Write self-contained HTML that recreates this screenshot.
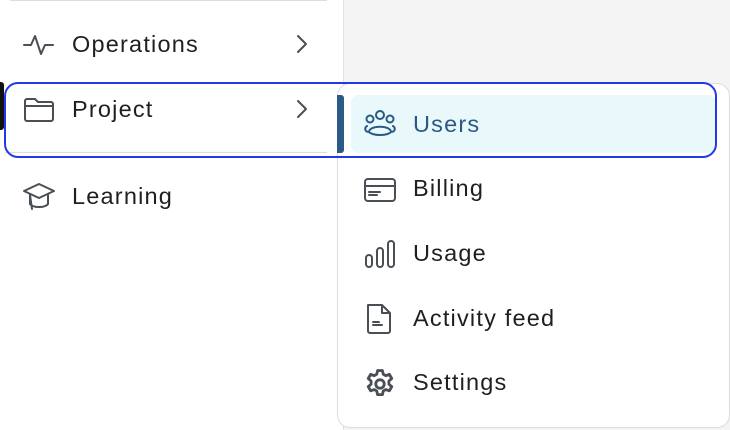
<!DOCTYPE html><html><head><style>
body{margin:0;width:730px;height:430px;overflow:hidden;background:#fff;font-family:"Liberation Sans",sans-serif;position:relative;color:#1f1f1f}
.a{position:absolute}
.t{position:absolute;font-size:23.5px;line-height:26px;letter-spacing:1.2px}
svg{position:absolute;fill:none;stroke:#4a4e55;stroke-width:2;stroke-linecap:round;stroke-linejoin:round}
</style></head><body>
<div class="a" style="left:343px;top:0;width:387px;height:430px;background:#f4f4f5;border-left:1px solid #e2e2e2"></div>
<div class="a" style="left:10px;top:0;width:317px;height:1px;background:#ddd"></div>
<div class="a" style="left:0;top:82px;width:4px;height:48px;background:#111;border-radius:0 3px 3px 0"></div>
<div class="a" style="left:5px;top:152px;width:322px;height:1px;background:#ddd"></div>
<svg style="left:22px;top:32px" width="34" height="26" viewBox="0 0 34 26"><path d="M2 13h7l4-9 6 18 4-9h8"/></svg>
<div class="t" style="left:72px;top:31px">Operations</div>
<svg style="left:294px;top:33px" width="16" height="22"><path d="M4 3l8 8-8 8"/></svg>
<svg style="left:22px;top:96px" width="34" height="28" viewBox="0 0 34 28"><path d="M3 5a2 2 0 0 1 2-2h8l3 3h13a2 2 0 0 1 2 2v15a2 2 0 0 1-2 2H5a2 2 0 0 1-2-2z M3 10h28"/></svg>
<div class="t" style="left:72px;top:96px">Project</div>
<svg style="left:294px;top:98px" width="16" height="22"><path d="M4 3l8 8-8 8"/></svg>
<svg style="left:22px;top:181px" width="34" height="32" viewBox="0 0 34 32"><path d="M17 3L2 10l15 7 15-7z M8 13v10c3 4 15 4 18 0V13 M8 14l2 14"/></svg>
<div class="t" style="left:72px;top:183px">Learning</div>
<div class="a" style="left:337px;top:83px;width:391px;height:343px;background:#fff;border:1px solid #ddd;border-radius:13px"></div>
<div class="a" style="left:337px;top:95px;width:7px;height:58px;background:#2b5a86;border-radius:0 3px 3px 0"></div>
<div class="a" style="left:351px;top:95px;width:365px;height:58px;background:#e9f8fa;border-radius:8px"></div>
<div class="a" style="left:4px;top:82px;width:709px;height:72px;border:2px solid #1f3ae6;border-radius:14px"></div>
<svg style="left:363px;top:109px;stroke:#2b5a86" width="34" height="30" viewBox="0 0 34 30"><circle cx="17" cy="6" r="4"/><circle cx="7" cy="10" r="3.5"/><circle cx="27" cy="10" r="3.5"/><path d="M6 23c0-7 22-7 22 0c-4 4-18 4-22 0z M4 17c-3 2-2 6 2 6 M30 17c3 2 2 6-2 6"/></svg>
<div class="t" style="left:413px;top:111px;color:#2b5a86">Users</div>
<svg style="left:363px;top:176px" width="34" height="28" viewBox="0 0 34 28"><rect x="2" y="3" width="30" height="22" rx="3"/><path d="M2 10h30 M6 19h8 M6 16h11"/></svg>
<div class="t" style="left:413px;top:175px">Billing</div>
<svg style="left:363px;top:238px" width="34" height="32" viewBox="0 0 34 32"><rect x="3" y="17" width="6" height="12" rx="3"/><rect x="14" y="10" width="6" height="19" rx="3"/><rect x="25" y="3" width="6" height="26" rx="3"/></svg>
<div class="t" style="left:413px;top:240px">Usage</div>
<svg style="left:363px;top:302px" width="34" height="34" viewBox="0 0 34 34"><path d="M5 3h14l8 8v18a2 2 0 0 1-2 2H7a2 2 0 0 1-2-2z M19 3v8h8 M10 23h9 M10 20h6"/></svg>
<div class="t" style="left:413px;top:305px">Activity feed</div>
<svg style="left:363px;top:367px" width="34" height="34" viewBox="0 0 24 24"><circle cx="12" cy="12" r="3"/><path d="M10.3 2.5h3.4l.6 2.6 1.8 1 2.5-.9 1.7 2.9-2 1.8v2.2l2 1.8-1.7 2.9-2.5-.9-1.8 1-.6 2.6h-3.4l-.6-2.6-1.8-1-2.5.9-1.7-2.9 2-1.8v-2.2l-2-1.8 1.7-2.9 2.5.9 1.8-1z"/></svg>
<div class="t" style="left:413px;top:369px">Settings</div>
</body></html>
